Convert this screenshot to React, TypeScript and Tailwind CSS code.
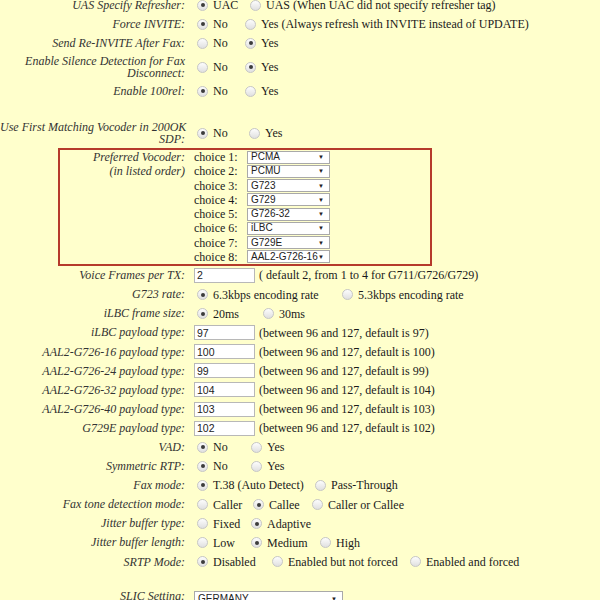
import React from 'react';

type Opt = { text: string; on?: boolean; w?: string };

const Radio = ({ on }: { on?: boolean }) => (
  <span className="ml-[3px] mr-[5px] flex h-[11px] w-[11px] shrink-0 items-center justify-center rounded-full border border-[#c6c6c6] bg-gradient-to-b from-[#fdfdfd] to-[#e0e0e0]">
    {on && <span className="h-[4px] w-[4px] rounded-full bg-[#3c3c3c]" />}
  </span>
);

const Radios = ({ opts }: { opts: Opt[] }) => (
  <>
    {opts.map((o) => (
      <span key={o.text} className={`flex shrink-0 items-center ${o.w ?? ''}`}>
        <Radio on={o.on} />
        <span>{o.text}</span>
      </span>
    ))}
  </>
);

const Select = ({ value, w, h = 'h-[13px]' }: { value: string; w: string; h?: string }) => (
  <span className={`relative flex items-center border border-[#a9a9a9] bg-white pl-[3px] font-['Liberation_Sans',Arial,sans-serif] text-[10px] leading-none text-[#222] ${w} ${h}`}>
    {value}
    <span className="absolute right-[5px] top-1/2 -translate-y-1/2 text-[6px]">▼</span>
  </span>
);

const Field = ({ value }: { value: string }) => (
  <input
    readOnly
    defaultValue={value}
    className="h-[15px] w-[61px] shrink-0 border border-[#b8b8b8] bg-white px-[2px] font-['Liberation_Sans',Arial,sans-serif] text-[10.5px] leading-none text-[#222] outline-none"
  />
);

function Row({ label, tall, children }: { label: React.ReactNode; tall?: boolean; children?: React.ReactNode }) {
  return (
    <div className={`flex items-center ${tall ? 'h-[29px]' : 'h-[19.1px]'}`}>
      <div className="w-[185px] shrink-0 whitespace-nowrap text-right italic leading-[12.5px] text-[#333]">{label}</div>
      <div className="flex items-center whitespace-nowrap pl-[9px]">{children}</div>
    </div>
  );
}

const CHOICES = ['PCMA', 'PCMU', 'G723', 'G729', 'G726-32', 'iLBC', 'G729E', 'AAL2-G726-16'];

const PAYLOADS = [
  { label: 'iLBC payload type:', value: '97' },
  { label: 'AAL2-G726-16 payload type:', value: '100' },
  { label: 'AAL2-G726-24 payload type:', value: '99' },
  { label: 'AAL2-G726-32 payload type:', value: '104' },
  { label: 'AAL2-G726-40 payload type:', value: '103' },
  { label: 'G729E payload type:', value: '102' },
];

export default function App() {
  return (
    <div className="h-[600px] w-full overflow-hidden bg-[#ffffcc] font-['Liberation_Serif','Times_New_Roman',serif] text-[12px] text-[#1a1a1a]">
      <div className="mt-[-4.5px]">
        <Row label="UAS Specify Refresher:">
          <Radios opts={[{ text: 'UAC', on: true, w: 'w-[53px]' }, { text: 'UAS (When UAC did not specify refresher tag)' }]} />
        </Row>
        <Row label="Force INVITE:">
          <Radios opts={[{ text: 'No', on: true, w: 'w-[48px]' }, { text: 'Yes (Always refresh with INVITE instead of UPDATE)' }]} />
        </Row>
        <Row label="Send Re-INVITE After Fax:">
          <Radios opts={[{ text: 'No', w: 'w-[48px]' }, { text: 'Yes', on: true }]} />
        </Row>
        <Row tall label={<>Enable Silence Detection for Fax<br />Disconnect:</>}>
          <Radios opts={[{ text: 'No', w: 'w-[48px]' }, { text: 'Yes', on: true }]} />
        </Row>
        <Row label="Enable 100rel:">
          <Radios opts={[{ text: 'No', on: true, w: 'w-[48px]' }, { text: 'Yes' }]} />
        </Row>
        <div className="h-[18px]" />
        <Row tall label={<>Use First Matching Vocoder in 200OK<br />SDP:</>}>
          <Radios opts={[{ text: 'No', on: true, w: 'w-[52px]' }, { text: 'Yes' }]} />
        </Row>

        {/* preferred vocoder block */}
        <div className="ml-[58px] flex h-[118px] w-[374px] border-2 border-[#b53a2b]">
          <div className="w-[125px] shrink-0 whitespace-nowrap text-right italic leading-[14.25px] text-[#333]">
            Preferred Vocoder:
            <br />
            (in listed order)
          </div>
          <div className="flex flex-col pl-[9px]">
            {CHOICES.map((c, i) => (
              <div key={c} className="flex h-[14.25px] items-center">
                <span className="w-[53px] shrink-0">choice {i + 1}:</span>
                <Select value={c} w="w-[83px]" />
              </div>
            ))}
          </div>
        </div>

        <Row label="Voice Frames per TX:">
          <Field value="2" />
          <span className="ml-[4px]">( default 2, from 1 to 4 for G711/G726/G729)</span>
        </Row>
        <Row label="G723 rate:">
          <Radios opts={[{ text: '6.3kbps encoding rate', on: true, w: 'w-[145px]' }, { text: '5.3kbps encoding rate' }]} />
        </Row>
        <Row label="iLBC frame size:">
          <Radios opts={[{ text: '20ms', on: true, w: 'w-[66px]' }, { text: '30ms' }]} />
        </Row>
        {PAYLOADS.map((p) => (
          <Row key={p.label} label={p.label}>
            <Field value={p.value} />
            <span className="ml-[4px]">(between 96 and 127, default is {p.value})</span>
          </Row>
        ))}
        <Row label="VAD:">
          <Radios opts={[{ text: 'No', on: true, w: 'w-[54px]' }, { text: 'Yes' }]} />
        </Row>
        <Row label="Symmetric RTP:">
          <Radios opts={[{ text: 'No', on: true, w: 'w-[54px]' }, { text: 'Yes' }]} />
        </Row>
        <Row label="Fax mode:">
          <Radios opts={[{ text: 'T.38 (Auto Detect)', on: true, w: 'w-[118px]' }, { text: 'Pass-Through' }]} />
        </Row>
        <Row label="Fax tone detection mode:">
          <Radios opts={[{ text: 'Caller', w: 'w-[56px]' }, { text: 'Callee', on: true, w: 'w-[59px]' }, { text: 'Caller or Callee' }]} />
        </Row>
        <Row label="Jitter buffer type:">
          <Radios opts={[{ text: 'Fixed', w: 'w-[54px]' }, { text: 'Adaptive', on: true }]} />
        </Row>
        <Row label="Jitter buffer length:">
          <Radios opts={[{ text: 'Low', w: 'w-[54px]' }, { text: 'Medium', on: true, w: 'w-[69px]' }, { text: 'High' }]} />
        </Row>
        <Row label="SRTP Mode:">
          <Radios opts={[{ text: 'Disabled', on: true, w: 'w-[75px]' }, { text: 'Enabled but not forced', w: 'w-[138px]' }, { text: 'Enabled and forced' }]} />
        </Row>
        <div className="h-[15px]" />
        <Row label="SLIC Setting:">
          <span className="mt-[7px]">
            <Select value="GERMANY" w="w-[149px]" h="h-[16px]" />
          </span>
        </Row>
      </div>
    </div>
  );
}
